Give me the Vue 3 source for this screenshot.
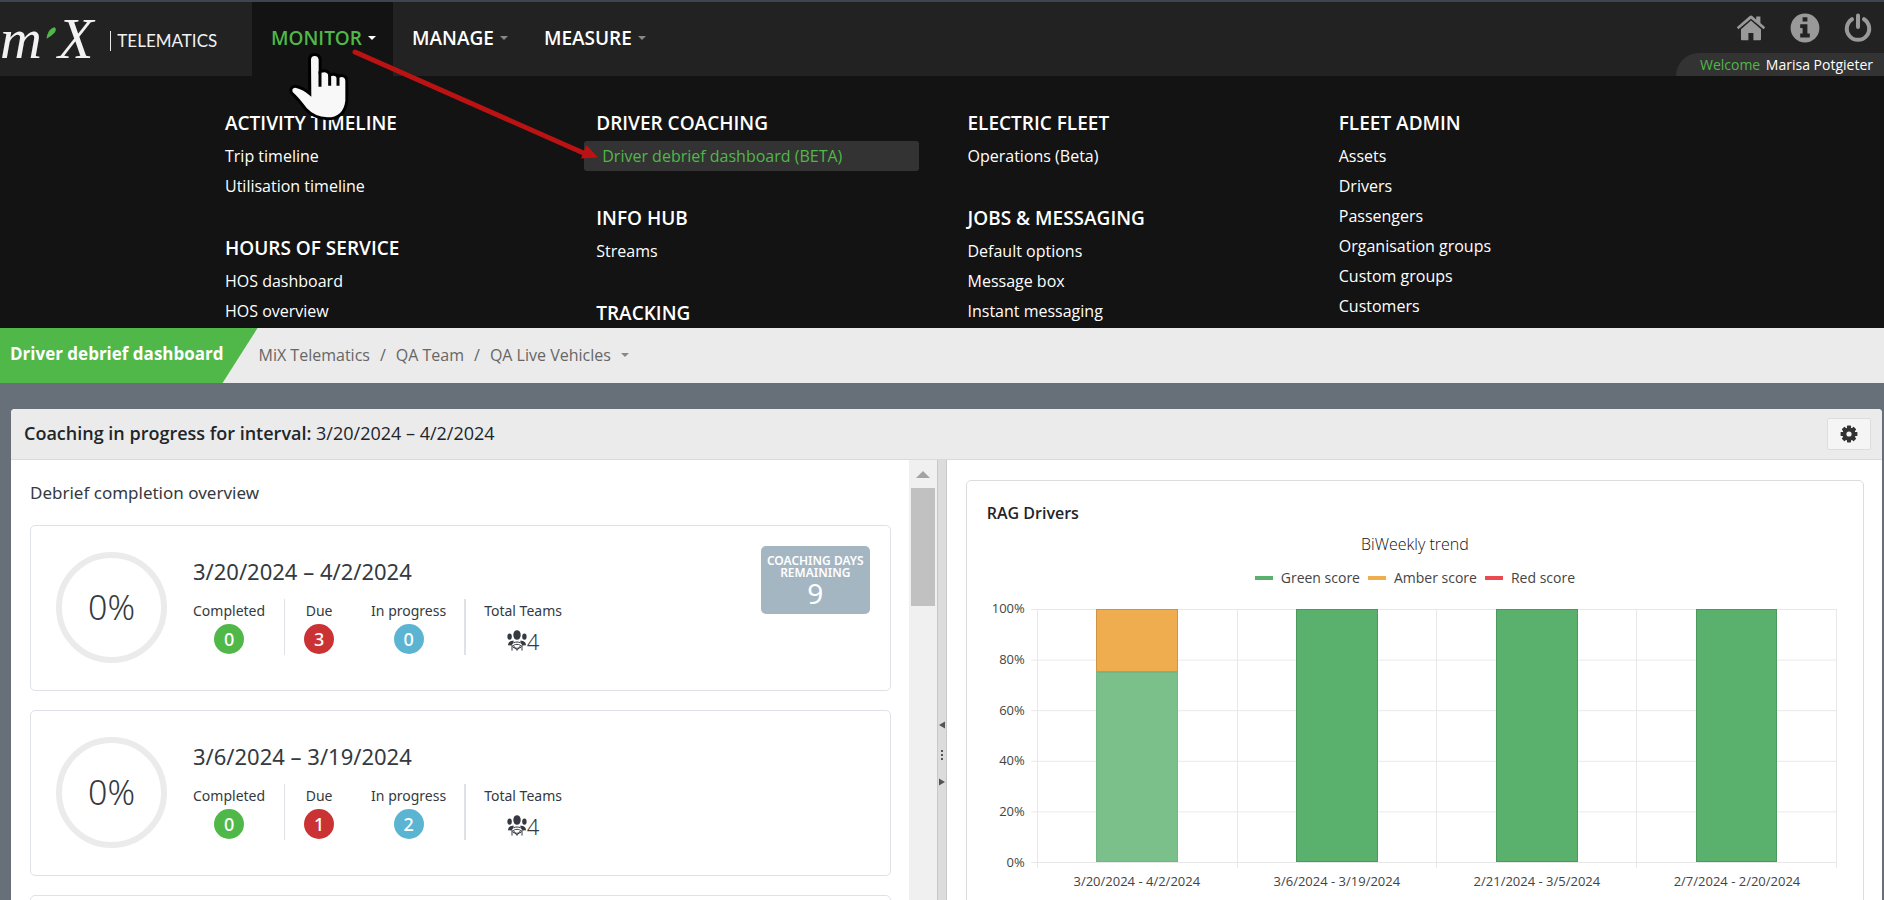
<script setup>
const nav = [
  { label: 'MONITOR', active: true },
  { label: 'MANAGE', active: false },
  { label: 'MEASURE', active: false },
]

const menu = [
  [
    { title: 'ACTIVITY TIMELINE', items: ['Trip timeline', 'Utilisation timeline'] },
    { title: 'HOURS OF SERVICE', items: ['HOS dashboard', 'HOS overview'] },
  ],
  [
    { title: 'DRIVER COACHING', items: ['Driver debrief dashboard (BETA)'], current: true },
    { title: 'INFO HUB', items: ['Streams'] },
    { title: 'TRACKING', items: [] },
  ],
  [
    { title: 'ELECTRIC FLEET', items: ['Operations (Beta)'] },
    { title: 'JOBS & MESSAGING', items: ['Default options', 'Message box', 'Instant messaging'] },
  ],
  [
    {
      title: 'FLEET ADMIN',
      items: ['Assets', 'Drivers', 'Passengers', 'Organisation groups', 'Custom groups', 'Customers'],
    },
  ],
]

const intervals = [
  { range: '3/20/2024 – 4/2/2024', percent: '0%', completed: 0, due: 3, progress: 0, teams: 4, daysLeft: 9 },
  { range: '3/6/2024 – 3/19/2024', percent: '0%', completed: 0, due: 1, progress: 2, teams: 4 },
]

const legend = [
  { label: 'Green score', kind: 'green' },
  { label: 'Amber score', kind: 'amber' },
  { label: 'Red score', kind: 'red' },
]
const ticks = ['100%', '80%', '60%', '40%', '20%', '0%']
const bars = [
  { label: '3/20/2024 - 4/2/2024', parts: [{ kind: 'amber', value: 25 }, { kind: 'soft', value: 75 }] },
  { label: '3/6/2024 - 3/19/2024', parts: [{ kind: 'green', value: 100 }] },
  { label: '2/21/2024 - 3/5/2024', parts: [{ kind: 'green', value: 100 }] },
  { label: '2/7/2024 - 2/20/2024', parts: [{ kind: 'green', value: 100 }] },
]
const teeth = [0, 45, 90, 135, 180, 225, 270, 315]
</script>

<template>
  <div class="page">
    <header class="topbar">
      <a class="logo" href="#" aria-label="MiX Telematics">
        <span class="mark">m</span>
        <svg class="tick" viewBox="0 0 8 10" aria-hidden="true"><path d="M0.4 9.6C1 5 3 1.5 6.5 0.4C8.6 1 8 3.4 6.4 5.2C4.8 7 2.6 8.4 0.4 9.6Z" /></svg>
        <span class="mark">X</span>
        <span class="word">TELEMATICS</span>
      </a>
      <nav class="nav">
        <button v-for="n in nav" :key="n.label" type="button" :class="['nav-item', { active: n.active }]">
          {{ n.label }}<i class="caret"></i>
        </button>
      </nav>
      <div class="account">
        <div class="tools">
          <button type="button" aria-label="Home">
            <svg width="30" height="26" viewBox="0 0 30 26">
              <path d="M15 5.6L5 14.2V24.2Q5 25.2 6 25.2H12.4V18H17.4V25.2H24Q25 25.2 25 24.2V14.2Z" />
              <path d="M15 0.6Q15.8 0.6 16.6 1.3L20.2 4.4V1.6H24.4V8L29.2 12.2L27.6 14.2L15 3.8L2.4 14.2L0.8 12.2L13.4 1.3Q14.2 0.6 15 0.6Z" />
            </svg>
          </button>
          <button type="button" aria-label="Information">
            <svg width="30" height="30" viewBox="0 0 30 30">
              <circle cx="15" cy="15" r="14.4" />
              <path class="cut" d="M12.6 4.2H17.4V8.4H12.6ZM10.2 11.2H17.4V20.6H19.8V24.4H10.2V20.6H12.6V15H10.2Z" />
            </svg>
          </button>
          <button type="button" aria-label="Log out">
            <svg width="28" height="30" viewBox="0 0 28 30">
              <path class="line" d="M8 6.2A11.2 11.2 0 1 0 20 6.2M14 2.6V14" />
            </svg>
          </button>
        </div>
        <div class="welcome"><span>Welcome</span> Marisa Potgieter</div>
      </div>
    </header>

    <div class="mega">
      <div v-for="(col, c) in menu" :key="c" class="mega-col">
        <section v-for="g in col" :key="g.title" class="group">
          <h2>{{ g.title }}</h2>
          <a v-for="i in g.items" :key="i" href="#" :class="{ current: g.current }">{{ i }}</a>
        </section>
      </div>
    </div>

    <div class="crumbbar">
      <h1>Driver debrief dashboard</h1>
      <nav class="crumbs">
        <a href="#">MiX Telematics</a><span>/</span><a href="#">QA Team</a><span>/</span><a href="#">QA Live Vehicles</a>
        <i class="caret"></i>
      </nav>
    </div>

    <main class="panel">
      <div class="panel-head">
        <p><strong>Coaching in progress for interval:</strong> 3/20/2024 – 4/2/2024</p>
        <button type="button" class="gear" aria-label="Settings">
          <svg width="18" height="18" viewBox="-9 -9 18 18">
            <rect v-for="t in teeth" :key="t" x="-2" y="-8.4" width="4" height="5" rx="0.6" :transform="`rotate(${t})`" />
            <circle class="ring" r="4.6" />
          </svg>
        </button>
      </div>

      <div class="split">
        <section class="left">
          <h3>Debrief completion overview</h3>
          <article v-for="v in intervals" :key="v.range" class="card">
            <div class="gauge">{{ v.percent }}</div>
            <div class="info">
              <h4>{{ v.range }}</h4>
              <div class="stats">
                <div class="stat"><span>Completed</span><b class="dot g">{{ v.completed }}</b></div>
                <div class="rule"></div>
                <div class="stat due"><span>Due</span><b class="dot r">{{ v.due }}</b></div>
                <div class="stat"><span>In progress</span><b class="dot b">{{ v.progress }}</b></div>
                <div class="rule thick"></div>
                <div class="stat">
                  <span>Total Teams</span>
                  <div class="teams">
                    <svg width="20" height="22" viewBox="0 0 20 22">
                      <ellipse cx="10" cy="5" rx="3.7" ry="4.8" />
                      <ellipse cx="2.6" cy="6.6" rx="2.2" ry="3.2" />
                      <ellipse cx="17.4" cy="6.6" rx="2.2" ry="3.2" />
                      <path d="M1 15.2C1.2 11.6 4 10.6 7 10.8L4.4 15.6ZM19 15.2C18.8 11.6 16 10.6 13 10.8L15.6 15.6Z" />
                      <path class="thin" d="M4.4 15C5.6 11 14.4 11 15.6 15M5.4 16.6C7 13.6 13 13.6 14.6 16.6M5 15V20.6M15 15V20.6M6.4 15.6L10 20.4L13.6 15.6M6 17.4C8 18.6 12 18.6 14 17.4" />
                    </svg>
                    {{ v.teams }}
                  </div>
                </div>
              </div>
            </div>
            <div v-if="v.daysLeft" class="days">
              <span>COACHING DAYS REMAINING</span>
              <b>{{ v.daysLeft }}</b>
            </div>
          </article>
          <article class="card"></article>
        </section>

        <div class="scroll" aria-hidden="true">
          <i class="up"></i>
          <div class="thumb"></div>
        </div>

        <div class="splitter">
          <svg width="8" height="64" viewBox="0 0 8 64" aria-hidden="true">
            <path d="M7 1.6V8.4L1 5ZM1 58.6V65.4L7 62ZM3 30H5V32H3ZM3 34H5V36H3ZM3 38H5V40H3Z" />
          </svg>
        </div>

        <section class="right">
          <div class="chart-card">
            <h3>RAG Drivers</h3>
            <p class="chart-title">BiWeekly trend</p>
            <ul class="legend">
              <li v-for="l in legend" :key="l.label"><i :class="l.kind"></i>{{ l.label }}</li>
            </ul>
            <div class="chart">
              <div class="yaxis"><span v-for="t in ticks" :key="t">{{ t }}</span></div>
              <div class="plot">
                <div class="cols">
                  <div v-for="b in bars" :key="b.label" class="col">
                    <div class="bar">
                      <div v-for="p in b.parts" :key="p.kind" :class="['part', p.kind]" :style="{ height: p.value + '%' }"></div>
                    </div>
                  </div>
                </div>
              </div>
              <div class="xaxis"><span v-for="b in bars" :key="b.label">{{ b.label }}</span></div>
            </div>
          </div>
        </section>
      </div>
    </main>

    <svg class="pointer" width="400" height="130" viewBox="0 0 400 130" aria-hidden="true">
      <path class="shaft" d="M155 12L388 115" />
      <path class="tip" d="M398 117.5L386.5 105L381 118.5Z" />
      <g transform="translate(-200 -40) scale(0.33333)">
        <path class="hand" d="M933 180Q933 168 944 168Q955 168 956 180V222Q962 217 974 217Q984 218 986 230Q994 227 1002 227Q1010 228 1012 236Q1018 231 1026 231Q1036 232 1036 244V302Q1030 352 982 352Q944 350 920 324Q896 292 878 276Q874 264 886 263Q910 268 934 290Z" />
        <path class="gap" d="M960 214V260M989 224V257M1014 228V257" />
      </g>
    </svg>
  </div>
</template>

<style>
body {
  background: #676f79;
}
</style>

<style scoped>
* {
  box-sizing: border-box;
}
.page {
  position: relative;
  height: 100vh;
  display: flex;
  flex-direction: column;
  overflow: hidden;
  font-family: 'Open Sans', 'Noto Sans', sans-serif;
  font-size: 16px;
  color: #212529;
}
h1, h2, h3, h4, p, ul {
  margin: 0;
  padding: 0;
  font-weight: 400;
}
button {
  margin: 0;
  padding: 0;
  border: 0;
  background: none;
  font: inherit;
  color: inherit;
}
a {
  color: inherit;
  text-decoration: none;
}
.topbar {
  flex: none;
  display: flex;
  height: 76px;
  border-top: 2px solid #40444f;
  background: #222;
}
.logo {
  display: flex;
  align-items: center;
  width: 252px;
  padding-top: 4px;
  color: #f2f2f2;
}
.mark {
  padding-bottom: 4px;
  font: italic 58px/70px 'Liberation Serif', serif;
}
.tick {
  width: 10px;
  height: 14px;
  margin: 0 2px 16px 4px;
  fill: #50b848;
}
.word {
  margin-left: 17px;
  padding-left: 6px;
  border-left: 1px solid #e8e8e8;
  font: 17px/20px Lato, sans-serif;
}
.nav {
  display: flex;
}
.nav-item {
  display: flex;
  align-items: center;
  padding: 0 17px 2px 19px;
  font-size: 19px;
  font-weight: 600;
  color: #fff;
}
.nav-item.active {
  background: #131313;
  color: #50b848;
}
.caret {
  margin-left: 6px;
  border: 4px solid transparent;
  border-top-color: #888;
  border-bottom: 0;
}
.active .caret {
  border-top-color: #fff;
}
.account {
  margin-left: auto;
  display: flex;
  flex-direction: column;
  justify-content: space-between;
  align-items: flex-end;
}
.tools {
  display: flex;
  align-items: center;
  gap: 24px;
  padding: 11px 12px 0 0;
}
.tools button {
  display: flex;
}
.tools svg {
  fill: #999;
}
.tools .cut {
  fill: #222;
}
.tools .line {
  fill: none;
  stroke: #999;
  stroke-width: 4;
  stroke-linecap: round;
}
.welcome {
  padding: 0 11px 0 24px;
  border-radius: 24px 0 0 0;
  background: #333;
  font-size: 14px;
  line-height: 23px;
  color: #fff;
}
.welcome span {
  margin-right: 2px;
  color: #50b848;
}
.mega {
  flex: none;
  display: grid;
  grid-template-columns: repeat(4, 1fr);
  column-gap: 37px;
  height: 252px;
  padding: 32px 223px 0 213px;
  overflow: hidden;
  background: #131313;
  color: #fff;
}
.group {
  margin-bottom: 32px;
}
.group h2 {
  margin-bottom: 3px;
  padding-left: 12px;
  font-size: 19px;
  font-weight: 600;
  line-height: 30px;
}
.group a {
  display: block;
  padding-left: 12px;
  line-height: 30px;
}
.group a.current {
  padding-left: 18px;
  border-radius: 3px;
  background: #333;
  color: #50b848;
}
.crumbbar {
  flex: none;
  display: flex;
  height: 55px;
  background: #ebebeb;
}
.crumbbar h1 {
  padding: 0 34px 4px 10px;
  clip-path: polygon(0 0, 100% 0, calc(100% - 35px) 100%, 0 100%);
  background: #50b848;
  color: #fff;
  font-size: 17px;
  font-weight: 700;
  line-height: 51px;
}
.crumbs {
  display: flex;
  align-items: center;
  gap: 10px;
  padding: 0 0 2px 1px;
  color: #666;
}
.crumbs .caret {
  margin-left: 0;
}
.panel {
  flex: 1;
  min-height: 0;
  display: flex;
  flex-direction: column;
  margin: 26px 2px 0 11px;
  overflow: hidden;
  border-radius: 4px 4px 0 0;
  background: #fff;
}
.panel-head {
  flex: none;
  display: flex;
  align-items: center;
  justify-content: space-between;
  height: 51px;
  padding: 0 11px 0 13px;
  border-bottom: 1px solid #dadada;
  background: #ebebeb;
  font-size: 18px;
}
.panel-head p {
  padding-bottom: 2px;
}
.panel-head strong {
  font-weight: 600;
}
.gear {
  display: grid;
  place-items: center;
  width: 44px;
  height: 32px;
  border: 1px solid #ddd;
  border-radius: 2px;
  background: #f5f5f5;
  fill: #333;
}
.ring {
  fill: none;
  stroke: #333;
  stroke-width: 4;
}
.split {
  flex: 1;
  min-height: 0;
  display: flex;
}
.left {
  flex: 897;
  min-width: 0;
  padding: 20px 18px 0 19px;
  overflow: hidden;
  font-family: 'Noto Sans', 'Open Sans', sans-serif;
  color: #343a40;
}
.left h3 {
  margin-bottom: 20px;
  font-size: 17px;
  line-height: 25px;
}
.card {
  display: flex;
  height: 166px;
  margin-bottom: 19px;
  padding: 20px 20px 0 25px;
  border: 1px solid #dee2e6;
  border-radius: 5px;
}
.gauge {
  flex: none;
  display: grid;
  place-items: center;
  width: 111px;
  height: 111px;
  margin: 6px 26px 0 0;
  padding-bottom: 2px;
  border: 6px solid #ebebeb;
  border-radius: 50%;
  font-size: 34px;
  font-weight: 300;
}
.info {
  flex: 1;
}
.info h4 {
  margin: 10px 0 12px;
  font-size: 22px;
  line-height: 31px;
}
.stats {
  display: flex;
}
.stat {
  display: flex;
  flex-direction: column;
  align-items: center;
  gap: 2px;
  font-size: 14px;
  line-height: 23px;
}
.due {
  margin: 0 37px 0 0;
}
.rule {
  width: 1px;
  height: 56px;
  margin: 0 19px;
  background: #dee2e6;
}
.thick {
  width: 2px;
  margin: 0 18px;
}
.dot {
  width: 30px;
  height: 30px;
  border-radius: 50%;
  color: #fff;
  font-size: 18px;
  font-weight: 500;
  line-height: 30px;
  text-align: center;
}
.g {
  background: #50b848;
}
.r {
  background: #cb3234;
}
.b {
  background: #5bb5d2;
}
.teams {
  display: flex;
  align-items: center;
  padding-top: 2px;
  font-size: 22px;
  font-weight: 300;
  line-height: 30px;
}
.teams svg {
  fill: #343a40;
}
.thin {
  fill: none;
  stroke: #343a40;
}
.days {
  display: flex;
  flex-direction: column;
  align-items: center;
  width: 109px;
  height: 68px;
  padding: 9px 2px 0;
  border-radius: 5px;
  background: #a5b6c3;
  color: #fff;
  text-align: center;
}
.days span {
  font-size: 12px;
  font-weight: 600;
  line-height: 12px;
}
.days b {
  font-size: 28px;
  font-weight: 400;
  line-height: 28px;
}
.scroll {
  flex: none;
  width: 28px;
  padding: 11px 2px 0;
  background: #f0f0f0;
}
.up {
  display: block;
  width: 14px;
  margin: 0 auto 10px;
  border: 7px solid transparent;
  border-top: 0;
  border-bottom-color: #a3a3a3;
}
.thumb {
  height: 118px;
  background: #c1c1c1;
}
.splitter {
  flex: none;
  display: flex;
  justify-content: center;
  width: 10px;
  padding-top: 260px;
  border: 1px solid #c8c8c8;
  border-width: 0 1px;
  background: #dcdcdc;
  fill: #555;
}
.splitter svg {
  overflow: visible;
}
.right {
  flex: 936;
  min-width: 0;
  padding: 20px 18px 0 19px;
}
.chart-card {
  height: 600px;
  padding: 20px 26px 0 20px;
  border: 1px solid #dcdcdc;
  border-radius: 5px;
}
.chart-card h3 {
  font-size: 16px;
  font-weight: 600;
  line-height: 24px;
}
.chart-title {
  padding: 8px 0 0 6px;
  font-weight: 300;
  line-height: 22px;
  text-align: center;
  color: #111;
}
.legend {
  display: flex;
  justify-content: center;
  gap: 8px;
  padding: 12px 0 0 6px;
  list-style: none;
  font-size: 14px;
  line-height: 22px;
  color: #444;
}
.legend li {
  display: flex;
  align-items: center;
  gap: 8px;
}
.legend i {
  width: 18px;
  height: 4px;
}
.green {
  background: #59b16d;
}
.amber {
  background: #efad50;
}
.red {
  background: #eb4b50;
}
.soft {
  background: #7bc08b;
}
.chart {
  display: grid;
  grid-template-columns: 38px 1fr;
  column-gap: 6px;
  padding-top: 20px;
  font-size: 13px;
  color: #444;
}
.yaxis {
  display: flex;
  flex-direction: column;
  justify-content: space-between;
  height: 270px;
  margin-top: -9px;
  line-height: 16px;
  text-align: right;
}
.plot {
  height: 254px;
  padding-left: 6px;
  border-bottom: 1px solid #e8e8e8;
  background: linear-gradient(#e8e8e8 1px, transparent 1px) 0 0 / 100% 20%;
}
.cols {
  display: grid;
  grid-template-columns: repeat(4, 1fr);
  height: 259px;
  border-right: 1px solid #e8e8e8;
}
.col {
  display: flex;
  justify-content: center;
  padding-bottom: 6px;
  border-left: 1px solid #e8e8e8;
}
.bar {
  width: 41%;
}
.part {
  border: 1px solid #4a9a5d;
}
.part.soft {
  border-color: #75b585;
}
.part.amber {
  border-color: #cf9544;
}
.xaxis {
  grid-column: 2;
  display: grid;
  grid-template-columns: repeat(4, 1fr);
  padding-left: 6px;
  line-height: 22px;
  text-align: center;
}
.pointer {
  position: absolute;
  top: 40px;
  left: 200px;
  pointer-events: none;
}
.shaft {
  fill: none;
  stroke: #bb1313;
  stroke-width: 5;
  stroke-linecap: round;
}
.tip {
  fill: #bb1313;
}
.hand {
  fill: #f8f8f8;
  stroke: #000;
  stroke-width: 18;
  stroke-linejoin: round;
  paint-order: stroke;
}
.gap {
  fill: none;
  stroke: #000;
  stroke-width: 9;
}
</style>
